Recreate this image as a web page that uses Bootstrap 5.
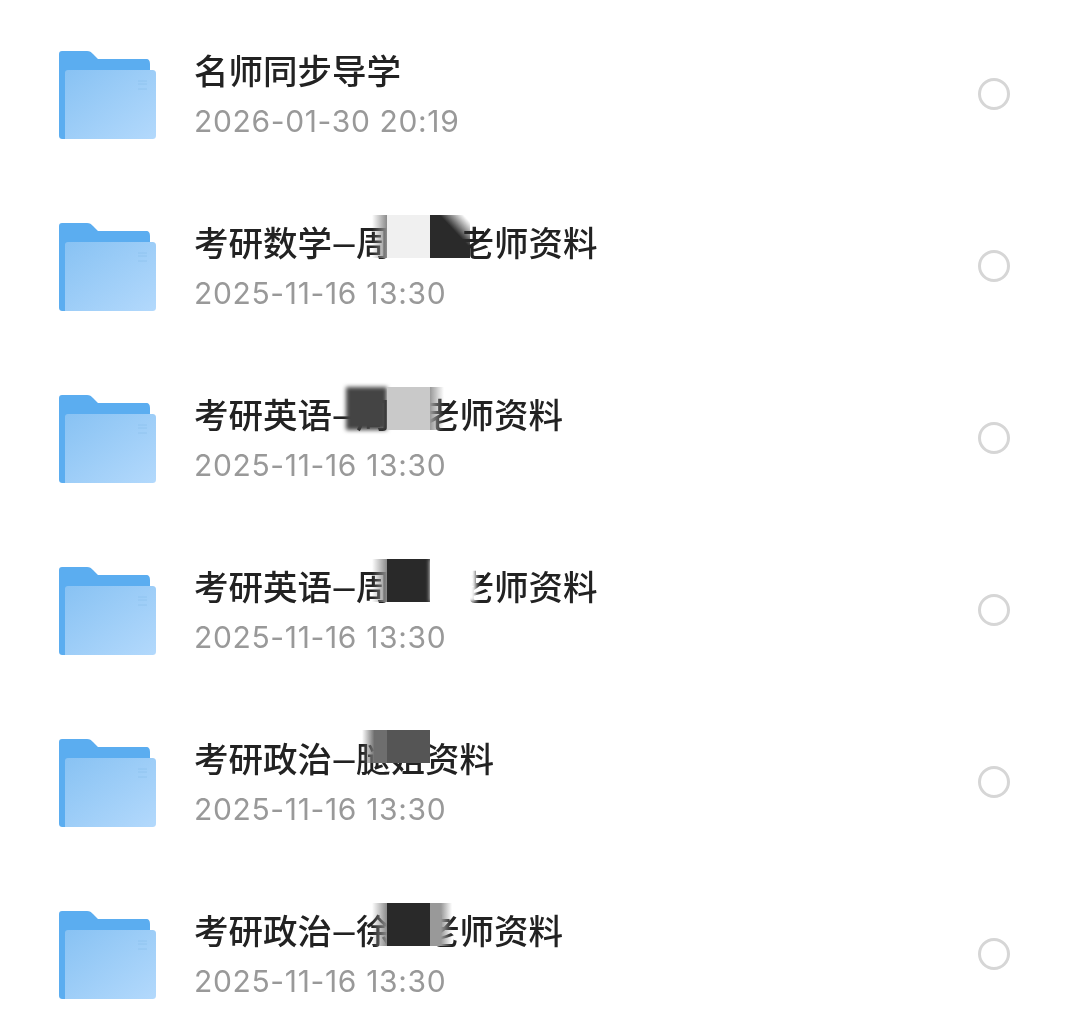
<!DOCTYPE html>
<html lang="en">
<head>
    <meta charset="UTF-8">
    <meta name="viewport" content="width=device-width, initial-scale=1.0">
    <link rel="stylesheet" href="https://cdn.jsdelivr.net/npm/bootstrap@5.3.3/dist/css/bootstrap.min.css">
    <title>资料列表</title>
    <style>
        body {
            background-color: #fff;
            font-family: "Noto Sans CJK SC", "Liberation Sans", sans-serif;
        }
        .file-list {
            padding-top: 8px;
        }
        .file-row {
            height: 172px;
            padding: 0 70px 0 58px;
            border: 0;
            gap: 38px;
        }
        .folder-icon {
            width: 98px;
            height: 90px;
            flex-shrink: 0;
            margin-top: 2px;
            filter: blur(0.6px);
        }
        .file-info {
            margin-top: 6px;
        }
        .file-name {
            position: relative;
            height: 48px;
            font-size: 34.5px;
            font-weight: 500;
            line-height: 48px;
            color: #222;
            white-space: nowrap;
            filter: blur(0.4px);
        }
        .name-dash {
            display: inline-block;
            width: 24px;
            text-align: center;
            font-family: "Liberation Sans", sans-serif;
            font-size: 38px;
            font-weight: 400;
        }
        .name-gap {
            display: inline-block;
            width: 1em;
        }
        .file-date {
            height: 56px;
            font-family: Inter, "Liberation Sans", sans-serif;
            font-size: 30px;
            line-height: 56px;
            letter-spacing: 0.65px;
            color: #999;
            filter: blur(0.4px);
        }
        .file-check {
            width: 32px;
            height: 32px;
            flex-shrink: 0;
            border: 3px solid #d6d6d6;
            border-radius: 50%;
            filter: blur(0.4px);
        }
        .smudge {
            position: absolute;
            top: -2.5px;
            height: 43px;
        }
        .s-fade-in {
            left: 178px;
            width: 15px;
            background: linear-gradient(to right, rgba(150,150,150,0), #8a8a8a);
        }
        .s-mid {
            left: 193px;
            width: 43px;
        }
        .s-right {
            left: 236px;
            width: 40px;
        }
        .s-light { background-color: #f0f0f0; }
        .s-black { background-color: #292929; }
        .s-black-fade {
            background: linear-gradient(to top right, #2a2a2a 62%, rgba(42,42,42,0) 92%);
        }
        .s-dark-wide {
            left: 152px;
            width: 41px;
            background-color: #444;
            filter: blur(2px);
        }
        .s-silver { background-color: #c9c9c9; }
        .s-grey-edge {
            left: 236px;
            width: 14px;
            background: linear-gradient(to right, #999, rgba(153,153,153,0));
        }
        .s-white {
            left: 236px;
            width: 46px;
            background-color: #fff;
            filter: blur(2px);
        }
        .s-low {
            top: -3px;
            height: 33px;
        }
        .s-grey-left {
            left: 168px;
            width: 25px;
            background: linear-gradient(to right, rgba(110,110,110,0), #6e6e6e 50%);
        }
        .s-grey-mid { background-color: #555; }
        .s-grey-right {
            left: 236px;
            width: 22px;
            background: linear-gradient(to right, #999 50%, rgba(153,153,153,0));
        }
    </style>
</head>
<body>
    <svg width="0" height="0" class="d-block">
        <defs>
            <linearGradient id="folderFront" x1="0" y1="0" x2="1" y2="1">
                <stop offset="0" stop-color="#88c2f3"/>
                <stop offset="1" stop-color="#b3d9fc"/>
            </linearGradient>
            <symbol id="folder" viewBox="0 0 98 90">
                <path d="M4 1H29C32 1 33 2 35 4L40 9H88C91 9 92 11 92 14V88C92 89 91 89 90 89H5C2 89 1 88 1 85V4C1 2 2 1 4 1Z" fill="#5badf0"/>
                <path d="M10 20H94C97 20 98 21 98 24V85C98 88 97 89 94 89H7V23C7 21 8 20 10 20Z" fill="url(#folderFront)"/>
                <path d="M80 31H89M80 34H89M80 39H89" stroke="#7fb7e6" stroke-width="1" opacity=".45"/>
            </symbol>
        </defs>
    </svg>

    <div class="list-group list-group-flush file-list">
        <div class="list-group-item d-flex align-items-center file-row">
            <svg class="folder-icon"><use href="#folder"/></svg>
            <div class="file-info flex-grow-1">
                <div class="file-name">名师同步导学</div>
                <div class="file-date">2026-01-30 20:19</div>
            </div>
            <div class="file-check"></div>
        </div>

        <div class="list-group-item d-flex align-items-center file-row">
            <svg class="folder-icon"><use href="#folder"/></svg>
            <div class="file-info flex-grow-1">
                <div class="file-name">考研数学<span class="name-dash">–</span>周<span class="name-gap"></span><span class="name-gap"></span>老师资料
                    <span class="smudge s-fade-in"></span>
                    <span class="smudge s-mid s-light"></span>
                    <span class="smudge s-right s-black-fade"></span>
                </div>
                <div class="file-date">2025-11-16 13:30</div>
            </div>
            <div class="file-check"></div>
        </div>

        <div class="list-group-item d-flex align-items-center file-row">
            <svg class="folder-icon"><use href="#folder"/></svg>
            <div class="file-info flex-grow-1">
                <div class="file-name">考研英语<span class="name-dash">–</span>周<span class="name-gap"></span>老师资料
                    <span class="smudge s-dark-wide"></span>
                    <span class="smudge s-mid s-silver"></span>
                    <span class="smudge s-grey-edge"></span>
                </div>
                <div class="file-date">2025-11-16 13:30</div>
            </div>
            <div class="file-check"></div>
        </div>

        <div class="list-group-item d-flex align-items-center file-row">
            <svg class="folder-icon"><use href="#folder"/></svg>
            <div class="file-info flex-grow-1">
                <div class="file-name">考研英语<span class="name-dash">–</span>周<span class="name-gap"></span><span class="name-gap"></span>老师资料
                    <span class="smudge s-fade-in"></span>
                    <span class="smudge s-mid s-black"></span>
                    <span class="smudge s-white"></span>
                </div>
                <div class="file-date">2025-11-16 13:30</div>
            </div>
            <div class="file-check"></div>
        </div>

        <div class="list-group-item d-flex align-items-center file-row">
            <svg class="folder-icon"><use href="#folder"/></svg>
            <div class="file-info flex-grow-1">
                <div class="file-name">考研政治<span class="name-dash">–</span>腿姐资料
                    <span class="smudge s-low s-grey-left"></span>
                    <span class="smudge s-low s-mid s-grey-mid"></span>
                </div>
                <div class="file-date">2025-11-16 13:30</div>
            </div>
            <div class="file-check"></div>
        </div>

        <div class="list-group-item d-flex align-items-center file-row">
            <svg class="folder-icon"><use href="#folder"/></svg>
            <div class="file-info flex-grow-1">
                <div class="file-name">考研政治<span class="name-dash">–</span>徐<span class="name-gap"></span>老师资料
                    <span class="smudge s-fade-in"></span>
                    <span class="smudge s-mid s-black"></span>
                    <span class="smudge s-grey-right"></span>
                </div>
                <div class="file-date">2025-11-16 13:30</div>
            </div>
            <div class="file-check"></div>
        </div>
    </div>

    <script src="https://cdn.jsdelivr.net/npm/bootstrap@5.3.3/dist/js/bootstrap.bundle.min.js"></script>
</body>
</html>
